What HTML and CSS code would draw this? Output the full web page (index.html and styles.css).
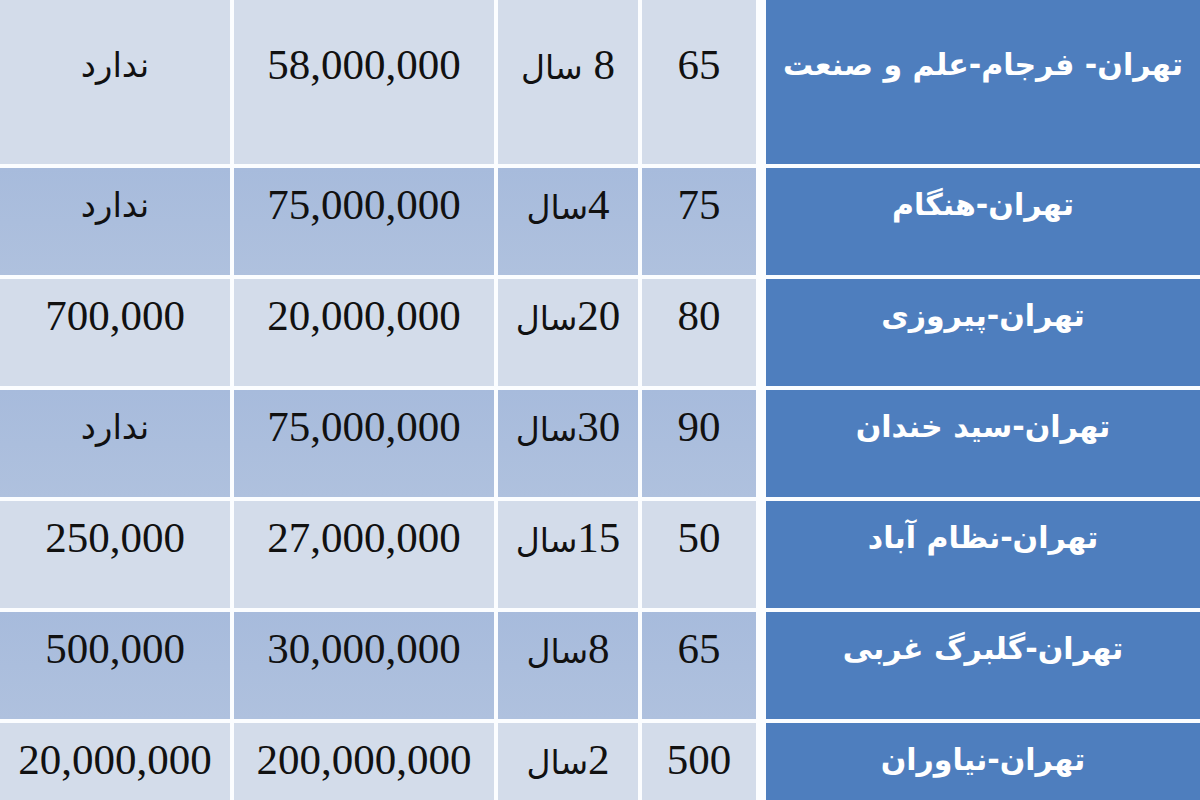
FILE: index.html
```html
<!DOCTYPE html>
<html lang="fa">
<head>
<meta charset="utf-8">
<title>جدول</title>
<link rel="stylesheet" href="styles.css">
</head>
<body>
<div class="table" dir="rtl">
  <div class="cell name first">تهران- فرجام-علم و صنعت</div>
  <div class="cell light first">65</div>
  <div class="cell light first">8 <span class="unit">سال</span></div>
  <div class="cell light first">58,000,000</div>
  <div class="cell light first fa">ندارد</div>

  <div class="cell name">تهران-هنگام</div>
  <div class="cell dark">75</div>
  <div class="cell dark">4<span class="unit">سال</span></div>
  <div class="cell dark">75,000,000</div>
  <div class="cell dark fa">ندارد</div>

  <div class="cell name">تهران-پیروزی</div>
  <div class="cell light">80</div>
  <div class="cell light">20<span class="unit">سال</span></div>
  <div class="cell light">20,000,000</div>
  <div class="cell light">700,000</div>

  <div class="cell name">تهران-سید خندان</div>
  <div class="cell dark">90</div>
  <div class="cell dark">30<span class="unit">سال</span></div>
  <div class="cell dark">75,000,000</div>
  <div class="cell dark fa">ندارد</div>

  <div class="cell name">تهران-نظام آباد</div>
  <div class="cell light">50</div>
  <div class="cell light">15<span class="unit">سال</span></div>
  <div class="cell light">27,000,000</div>
  <div class="cell light">250,000</div>

  <div class="cell name">تهران-گلبرگ غربی</div>
  <div class="cell dark">65</div>
  <div class="cell dark">8<span class="unit">سال</span></div>
  <div class="cell dark">30,000,000</div>
  <div class="cell dark">500,000</div>

  <div class="cell name">تهران-نیاوران</div>
  <div class="cell light">500</div>
  <div class="cell light">2<span class="unit">سال</span></div>
  <div class="cell light">200,000,000</div>
  <div class="cell light">20,000,000</div>
</div>
</body>
</html>
```

FILE: styles.css
```css
html, body {
  margin: 0;
  padding: 0;
  background: #ffffff;
  width: 1200px;
  height: 800px;
  overflow: hidden;
}

.table {
  display: grid;
  grid-template-columns: 440px 114px 140px 260px 230px;
  grid-template-rows: 164px repeat(6, 107px);
  gap: 4px;
  background: #fbfdff;
  width: 1200px;
}

.cell {
  display: block;
  text-align: center;
  padding-top: 11px;
  box-sizing: border-box;
  font-family: "Liberation Serif", "DejaVu Sans", serif;
  font-size: 43px;
  line-height: 52px;
  color: #111111;
  white-space: nowrap;
}

.cell.first {
  padding-top: 39px;
}

.light {
  background: #d3dcea;
}

.dark {
  background: linear-gradient(#a7bbdc, #afc1de);
}

.unit {
  font-family: "DejaVu Sans", sans-serif;
  font-size: 33px;
}

.fa {
  font-family: "DejaVu Sans", sans-serif;
  font-size: 34px;
}

.name {
  margin-left: 6px;
  background: #4e7ebe;
  color: #ffffff;
  font-family: "DejaVu Sans", sans-serif;
  font-weight: bold;
  font-size: 30px;
}
```
